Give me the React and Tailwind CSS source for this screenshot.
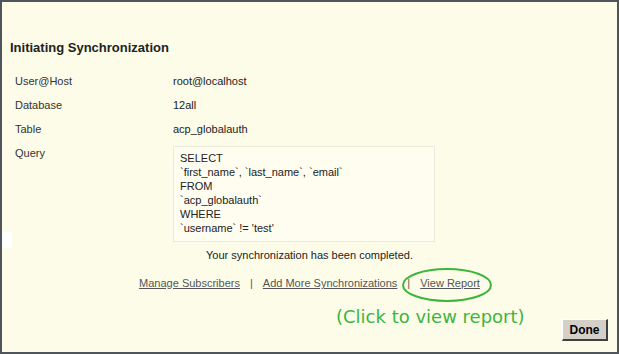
import React from 'react';

const rows = [
  { label: 'User@Host', value: 'root@localhost' },
  { label: 'Database', value: '12all' },
  { label: 'Table', value: 'acp_globalauth' },
];

const query = [
  'SELECT',
  '`first_name`, `last_name`, `email`',
  'FROM',
  '`acp_globalauth`',
  'WHERE',
  "`username` != 'test'",
];

export default function App() {
  return (
    <div className="relative w-[619px] h-[354px] overflow-hidden border-2 border-[#50555c] bg-[#fdfce9] text-[11px] text-[#222] font-['Liberation_Sans',Arial,sans-serif]">
      {/* title */}
      <div className="mt-[38px] pl-[8px] h-4 leading-4 text-[13px] font-bold text-[#222]">
        Initiating Synchronization
      </div>

      {/* details */}
      <div className="mt-[13px] flex flex-col">
        {rows.map(r => (
          <div key={r.label} className="flex h-6 items-center">
            <div className="w-[171px] pl-[13px] text-[#333]">{r.label}</div>
            <div>{r.value}</div>
          </div>
        ))}
        <div className="flex mt-[5px]">
          <div className="w-[171px] pl-[13px] pt-[1px] leading-[13px] text-[#333]">Query</div>
          <div className="w-[262px] h-[96px] border border-[#eceadb] bg-[#fefdf0] pl-[6px] pt-[4px] leading-[14px]">
            {query.map((q, i) => (
              <div key={i} className="whitespace-pre">{q}</div>
            ))}
          </div>
        </div>
      </div>

      <div className="mt-[7px] text-center leading-[13px]">Your synchronization has been completed.</div>

      {/* links */}
      <div className="mt-[15px] flex justify-center items-center gap-[10px] text-[#555] leading-[13px]">
        <a href="#" className="underline">Manage Subscribers</a>
        <span>|</span>
        <a href="#" className="underline">Add More Synchronizations</a>
        <span>|</span>
        <a href="#" className="underline">View Report</a>
      </div>

      <div className="flex justify-end pr-[9px] mt-[29px]">
        <button className="w-[46px] h-[22px] bg-[#d4d0c8] border-t border-l border-t-white border-l-white border-b-2 border-r-2 border-b-[#404040] border-r-[#404040] text-[12px] font-bold text-black leading-none">
          Done
        </button>
      </div>

      {/* annotation */}
      <svg className="absolute left-[399px] top-[265px]" width="94" height="36" viewBox="0 0 94 36">
        <ellipse cx="46" cy="18" rx="44" ry="16" fill="none" stroke="#3cb53c" strokeWidth="2" />
      </svg>
      <div className="absolute left-[334px] top-[304px] text-[18px] leading-[22px] text-[#3cb53c] font-['DejaVu_Sans',Verdana,sans-serif]">
        (Click to view report)
      </div>

      <div className="absolute left-[-2px] top-[230px] w-[12px] h-[16px] bg-white" />
    </div>
  );
}
